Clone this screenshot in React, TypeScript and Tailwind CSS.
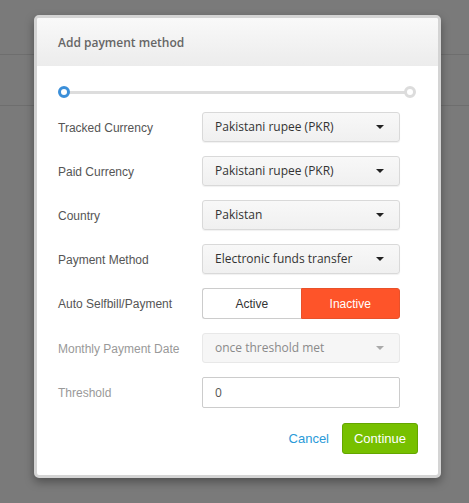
// 支払い方法の追加モーダル

const ROWS: { label: string; value: string }[] = [
  { label: "Tracked Currency", value: "Pakistani rupee (PKR)" },
  { label: "Paid Currency", value: "Pakistani rupee (PKR)" },
  { label: "Country", value: "Pakistan" },
  { label: "Payment Method", value: "Electronic funds transfer" },
];

const SANS = "font-['Liberation_Sans',Arial,sans-serif]";
const OPEN = "font-['Open_Sans','Noto_Sans',sans-serif]";

function Caret({ muted }: { muted?: boolean }) {
  return (
    <span
      className={`h-0 w-0 border-x-[4px] border-t-[4px] border-x-transparent ${
        muted ? "border-t-[#aaaaaa]" : "border-t-[#222222]"
      }`}
    />
  );
}

function Select({ value, disabled }: { value: string; disabled?: boolean }) {
  return (
    <div
      className={`flex h-[30px] w-[198px] items-center justify-between rounded-[3px] border pl-[12px] pr-[15px] text-[12px] ${OPEN} ${
        disabled
          ? "border-[#e8e8e8] bg-[#f6f6f6] text-[#8a8a8a]"
          : "border-[#d9d9d9] bg-gradient-to-b from-[#f8f8f8] to-[#f0f0f0] text-[#333333] shadow-[0_1px_1px_rgba(0,0,0,0.06)]"
      }`}
    >
      <span>{value}</span>
      <Caret muted={disabled} />
    </div>
  );
}

export default function App() {
  return (
    <main className="relative h-[503px] w-full overflow-hidden bg-[#7a7a7a]">
      <div className="h-[55px] border-b border-[#6e6e6e]" />
      <div className="h-[51px] border-b border-[#6e6e6e]" />

      <div className="absolute left-[34px] top-[15px] w-[407px] rounded-[5px] border-[3px] border-[#d4d4d4] bg-white shadow-[0_4px_10px_rgba(0,0,0,0.35)]">
        <div className="flex h-[48px] items-center rounded-t-[2px] bg-gradient-to-b from-[#f9f9f9] to-[#ececec] px-[21px] pt-[1px]">
          <h1 className={`text-[12px] font-semibold text-[#666666] ${OPEN}`}>Add payment method</h1>
        </div>

        <div className="px-[21px] pb-[21px] pt-[20px]">
          <div className="relative mr-[1px] flex h-[12px] items-center">
            <div className="absolute left-[5px] right-[5px] h-[3px] bg-[#dddddd]" />
            <span className="relative h-[12px] w-[12px] rounded-full border-[3px] border-[#3b8fd9] bg-white" />
            <span className="relative ml-auto h-[12px] w-[12px] rounded-full border-[3px] border-[#dcdcdc] bg-white" />
          </div>

          <div className={`mt-[14px] flex flex-col gap-[14px] text-[12px] ${SANS}`}>
            {ROWS.map((row) => (
              <div key={row.label} className="flex items-center">
                <span className="w-[144px] pt-[1px] text-[#555555]">{row.label}</span>
                <Select value={row.value} />
              </div>
            ))}

            <div className="flex items-center">
              <span className="w-[144px] pt-[1px] text-[#555555]">Auto Selfbill/Payment</span>
              <div className="flex h-[31px] w-[198px]">
                <button className="flex-1 rounded-l-[3px] border border-r-0 border-[#cccccc] bg-white text-[#333333]">
                  Active
                </button>
                <button className="flex-1 rounded-r-[3px] border border-[#e8512a] bg-[#fe5429] text-white">
                  Inactive
                </button>
              </div>
            </div>

            <div className="flex items-center">
              <span className="w-[144px] pt-[1px] text-[#999999]">Monthly Payment Date</span>
              <Select value="once threshold met" disabled />
            </div>

            <div className="flex items-center">
              <span className="w-[144px] pt-[1px] text-[#999999]">Threshold</span>
              <div
                className={`flex h-[31px] w-[198px] items-center rounded-[2px] border border-[#cccccc] bg-white pl-[12px] text-[12px] text-[#555555] ${OPEN}`}
              >
                0
              </div>
            </div>
          </div>

          <div className={`mt-[15px] flex items-center justify-end gap-[13px] text-[13px] ${SANS}`}>
            <a className="text-[#2a9ad8]">Cancel</a>
            <button className="-mr-[1px] h-[31px] w-[76px] rounded-[3px] border border-[#64a600] bg-[#77c000] text-white">
              Continue
            </button>
          </div>
        </div>
      </div>
    </main>
  );
}
